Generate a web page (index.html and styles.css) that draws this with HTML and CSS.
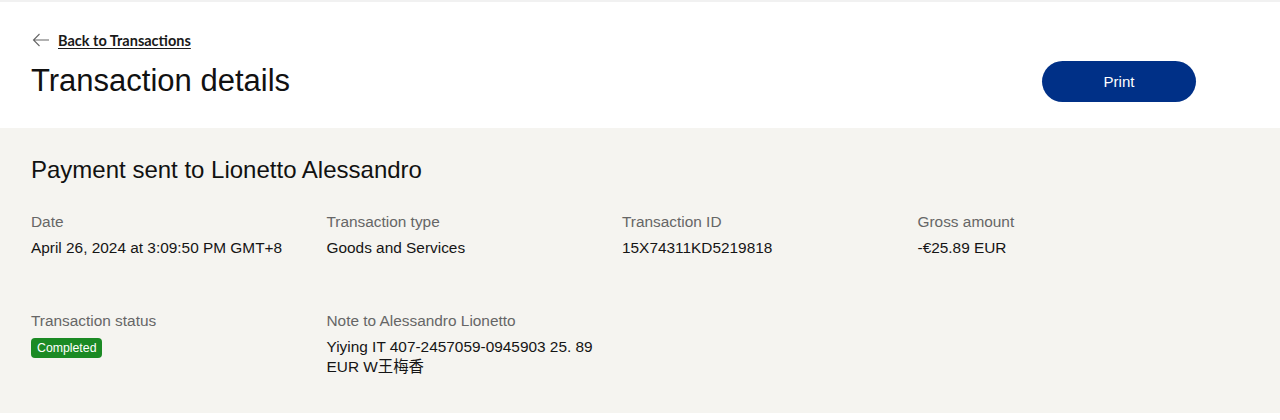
FILE: index.html
```html
<!DOCTYPE html>
<html lang="en">
<head>
<meta charset="utf-8">
<title>Transaction details</title>
<link rel="stylesheet" href="styles.css">
</head>
<body>
<header class="page-header">
  <a class="back-link" href="#">
    <svg class="back-icon" width="18" height="14" viewBox="0 0 18 14" aria-hidden="true">
      <path d="M17 7H1.5M7.5 1L1.5 7l6 6" fill="none" stroke="#666" stroke-width="1.1"/>
    </svg>
    <span class="back-text">Back to Transactions</span>
  </a>
  <div class="title-row">
    <h1 class="page-title">Transaction details</h1>
    <button class="print-btn" type="button">Print</button>
  </div>
</header>
<main class="details">
  <h2 class="details-title">Payment sent to Lionetto Alessandro</h2>
  <div class="details-grid">
    <div class="field">
      <div class="label">Date</div>
      <div class="value">April 26, 2024 at 3:09:50 PM GMT+8</div>
    </div>
    <div class="field">
      <div class="label">Transaction type</div>
      <div class="value">Goods and Services</div>
    </div>
    <div class="field">
      <div class="label">Transaction ID</div>
      <div class="value">15X74311KD5219818</div>
    </div>
    <div class="field">
      <div class="label">Gross amount</div>
      <div class="value">-€25.89 EUR</div>
    </div>
    <div class="field">
      <div class="label">Transaction status</div>
      <div class="badge-wrap"><span class="badge">Completed</span></div>
    </div>
    <div class="field">
      <div class="label">Note to Alessandro Lionetto</div>
      <div class="value note">Yiying IT 407-2457059-0945903 25. 89 EUR W王梅香</div>
    </div>
  </div>
</main>
</body>
</html>
```
FILE: styles.css
```css
* { box-sizing: border-box; }
html, body { margin: 0; padding: 0; background: #fff; }
body {
  font-family: "Liberation Sans", Arial, "Noto Sans CJK SC", sans-serif;
  color: #1a1a1a;
}
.page-header {
  border-top: 2px solid #f1f1f1;
  padding: 28px 84px 26px 31px;
  background: #fff;
}
.back-link {
  display: flex;
  align-items: center;
  height: 20px;
  gap: 8px;
  color: #1a1a1a;
  text-decoration: none;
}
.back-icon { margin-left: 1px; }
.back-text {
  font-family: Lato, "Open Sans", sans-serif;
  font-weight: 700;
  font-size: 14.5px;
  text-decoration: underline;
  text-underline-offset: 2px;
}
.title-row {
  margin-top: 10px;
  height: 42px;
  display: flex;
  align-items: center;
  justify-content: space-between;
}
.page-title {
  margin: 0;
  font-weight: 400;
  font-size: 31px;
  line-height: 40px;
  color: #111;
}
.print-btn {
  width: 154px;
  height: 41px;
  border: none;
  border-radius: 21px;
  background: #003087;
  color: #fff;
  font-family: "Liberation Sans", Arial, sans-serif;
  font-size: 15px;
  cursor: pointer;
}
.details {
  background: #f5f4f0;
  padding: 28px 67px 36px 31px;
}
.details-title {
  margin: 0;
  font-weight: 400;
  font-size: 24px;
  line-height: 28px;
  color: #111;
}
.details-grid {
  margin-top: 28px;
  display: grid;
  grid-template-columns: repeat(4, 1fr);
  row-gap: 53px;
}
.label {
  font-size: 15.4px;
  line-height: 20px;
  color: #666;
}
.value {
  margin-top: 6px;
  font-size: 15.4px;
  line-height: 20px;
  color: #151515;
}
.note { max-width: 285px; }
.badge-wrap { margin-top: 7px; height: 20px; display: flex; }
.badge {
  display: inline-block;
  background: #1b8a24;
  color: #fff;
  font-size: 12.3px;
  line-height: 20px;
  padding: 0 6px;
  border-radius: 4px;
}
```
